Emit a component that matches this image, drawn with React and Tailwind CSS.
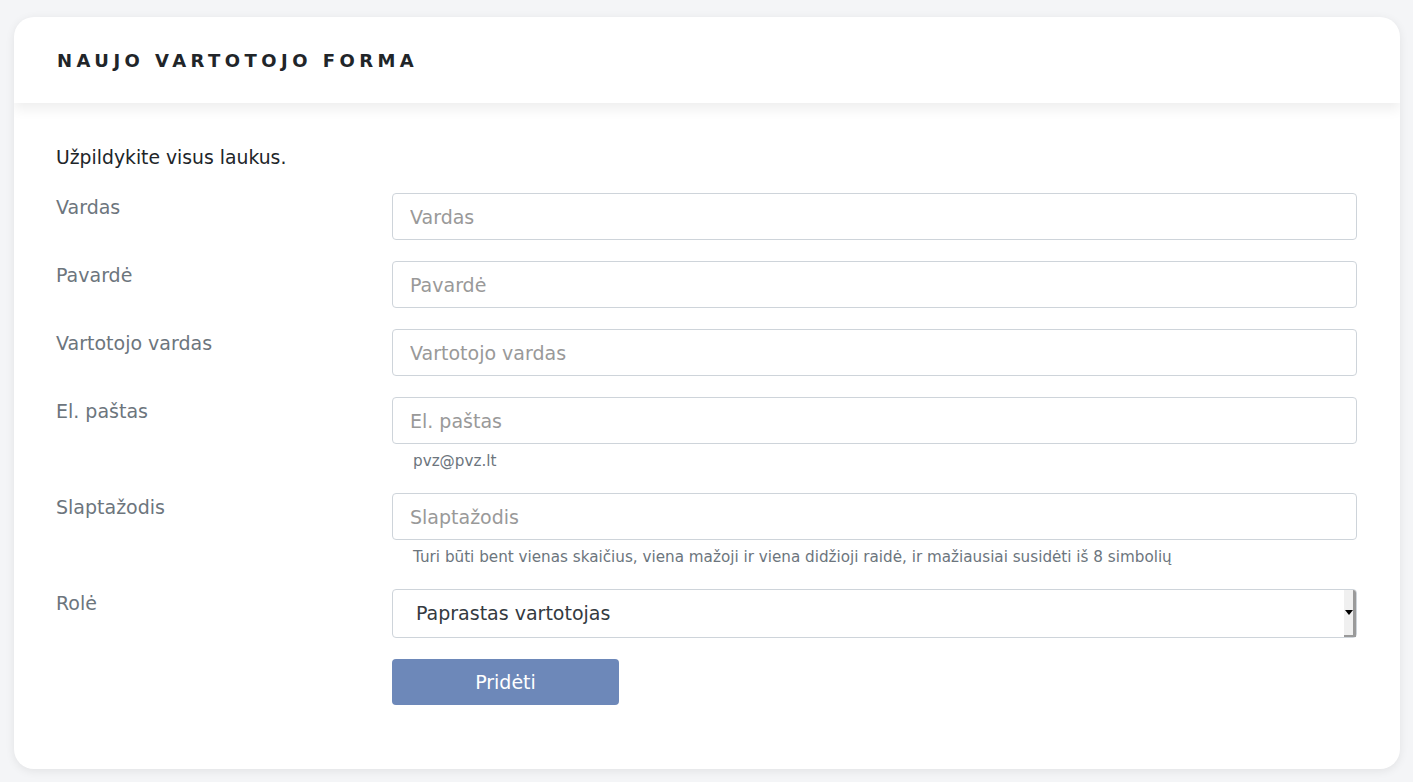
const FIELDS = [
  { label: 'Vardas', type: 'text' },
  { label: 'Pavardė', type: 'text' },
  { label: 'Vartotojo vardas', type: 'text' },
  { label: 'El. paštas', type: 'email', help: 'pvz@pvz.lt' },
  {
    label: 'Slaptažodis',
    type: 'password',
    help: 'Turi būti bent vienas skaičius, viena mažoji ir viena didžioji raidė, ir mažiausiai susidėti iš 8 simbolių',
  },
];

function Row({ label, children }) {
  return (
    <div className="flex items-start">
      <label className="w-[336px] shrink-0 leading-[28px] text-[#6c757d]">{label}</label>
      <div className="flex-1 flex flex-col">{children}</div>
    </div>
  );
}

export default function App() {
  return (
    <div
      className="min-h-screen bg-[#f4f5f7] pt-[17px] pb-[13px] pl-[14px] pr-[13px] text-[19px]"
      style={{ fontFamily: '"DejaVu Sans", sans-serif' }}
    >
      <div className="bg-white rounded-[20px] shadow-[0_2px_10px_rgba(0,0,0,0.08)] overflow-hidden">
        <div className="h-[86px] flex items-center px-[43px] relative z-10 shadow-[0_6px_12px_rgba(0,0,0,0.07)]">
          <h1 className="font-bold text-[18px] tracking-[4.45px] text-[#212529]">NAUJO VARTOTOJO FORMA</h1>
        </div>
        <div className="pt-[41px] pb-[64px] pl-[42px] pr-[43px] flex flex-col gap-[21px]">
          <p className="leading-[28px] text-[18.8px] text-[#212529]">Užpildykite visus laukus.</p>
          {FIELDS.map((f) => (
            <Row key={f.label} label={f.label}>
              <input
                type={f.type}
                placeholder={f.label}
                className="h-[47px] w-full border border-[#ced4da] rounded-[4px] px-[17px] text-[#495057] placeholder:text-[#999] outline-none"
              />
              {f.help && (
                <span className="mt-[6px] pl-[21px] text-[15.2px] leading-[22px] text-[#6c757d]">{f.help}</span>
              )}
            </Row>
          ))}
          <Row label="Rolė">
            <div className="relative h-[49px]">
              <select className="appearance-none h-[49px] w-full border border-[#ced4da] rounded-[4px] pl-[23px] text-[#343a40] bg-white">
                <option>Paprastas vartotojas</option>
              </select>
              <div className="absolute right-[1px] top-[1px] bottom-[1px] w-[12px] bg-[#f0f0f0] border-r-[3px] border-b-[2px] border-[#9a9a9a] rounded-tr-[3px] flex items-center justify-center pointer-events-none">
                <span className="w-0 h-0 border-l-[4px] border-r-[4px] border-t-[5px] border-l-transparent border-r-transparent border-t-black" />
              </div>
            </div>
          </Row>
          <div className="pl-[336px]">
            <button className="w-[227px] h-[46px] rounded-[4px] bg-[#6d88b9] text-white">Pridėti</button>
          </div>
        </div>
      </div>
    </div>
  );
}
